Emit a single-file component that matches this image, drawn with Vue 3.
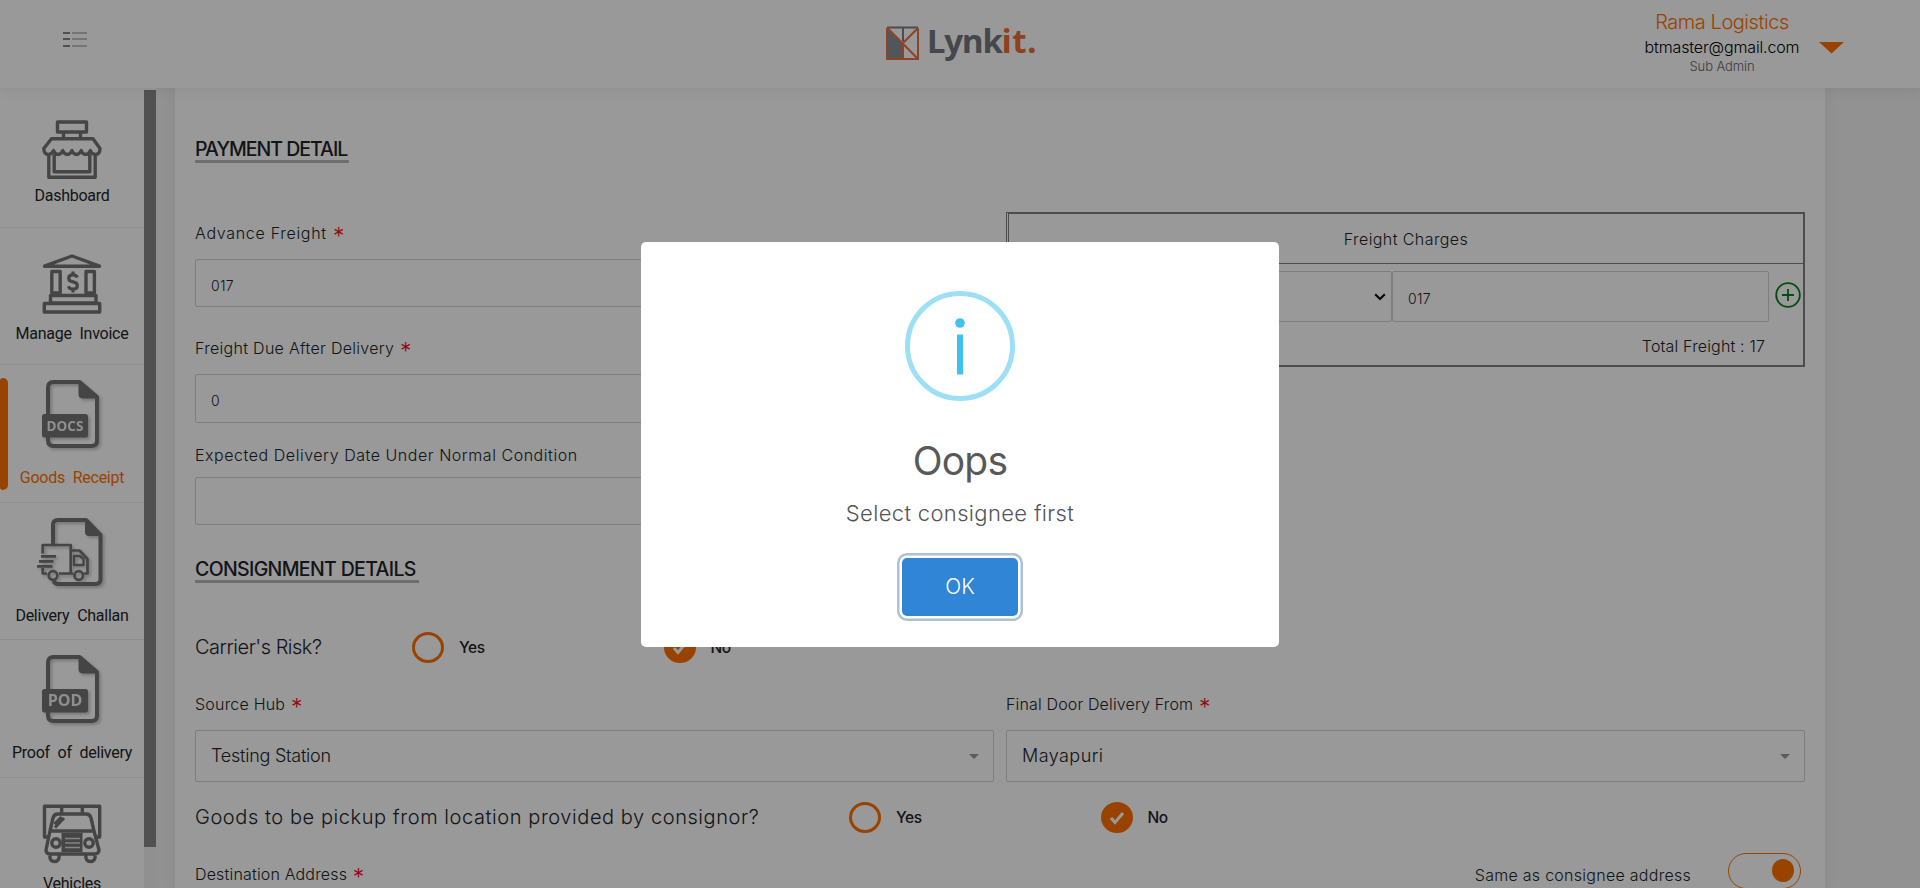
<script setup>
const nav = [
  { id: 'dashboard', label: 'Dashboard' },
  { id: 'invoice', label: 'Manage Invoice' },
  { id: 'receipt', label: 'Goods Receipt', tall: true, active: true, tag: 'DOCS' },
  { id: 'challan', label: 'Delivery Challan', tall: true },
  { id: 'pod', label: 'Proof of delivery', tall: true, tag: 'POD' },
  { id: 'vehicles', label: 'Vehicles' },
]
</script>

<template>
  <div class="page">
    <header class="topbar">
      <svg class="menu" width="24" height="16" viewBox="0 0 24 16">
        <path d="M0 1h7M0 7h7M0 14h7" stroke="#858585" stroke-width="2" />
        <path d="M9 1h15M9 7h15M9 14h15" stroke="#c4c4c4" stroke-width="2" />
      </svg>
      <div class="logo">
        <svg width="33" height="35" viewBox="0 0 33 35" fill="none">
          <path d="M2 4V32H17V17z" fill="#8b8f94" />
          <path d="M1 1.5H32M17 2V15" stroke="#7c8085" stroke-width="2" />
          <path d="M1 2V33H32V2M1.500 2L31 32M31 3L17 17V32" stroke="#ee7040" stroke-width="2" />
        </svg>
        <span class="lynk">Lynk</span><span class="it">it.</span>
      </div>
      <div class="user">
        <div class="company">Rama Logistics</div>
        <div class="email">btmaster@gmail.com</div>
        <div class="role">Sub Admin</div>
      </div>
      <svg class="caret" width="25" height="12" viewBox="0 0 25 12"><path d="M0 0H25L12.500 11.500z" fill="#ff7000" /></svg>
    </header>

    <div class="body">
      <aside class="sidebar">
        <nav class="nav">
          <a v-for="n in nav" :key="n.id" class="item" :class="{ tall: n.tall, active: n.active }">
            <svg v-if="n.id === 'dashboard'" class="ic" width="60" height="60" viewBox="0 0 60 60">
              <path d="M15.500 6H44.500V16H15.500zM21.500 16v6M38.500 16v6M9.500 22.800H51L58 32.500q0 6-4.700 6q-3.500 0-5-4q-1.500 4-4.600 4t-4.600-4q-1.500 4-4.600 4t-4.600-4q-1.500 4-4.600 4t-4.600-4q-1.500 4-4.600 4t-4.600-4q-1.500 4-5 4q-4.500 0-4.700-6zM6.800 38.500V61.300H53.200V38.500M12.200 38.500V55.700H47.800V38.500" />
            </svg>
            <svg v-else-if="n.id === 'invoice'" class="ic" width="60" height="60" viewBox="0 0 60 60">
              <path d="M2.500 12.200L30 2L57.500 12.200zM9.800 17.500H18.200V39H9.800zM44 17.500H52.400V39H44zM8.500 41.500H54V49H8.500zM2.300 49.500H57.700V58H2.300z" />
              <path d="M35.300 23.500q-1-2.700-4.300-2.700q-4.300 0-4.300 3.400q0 3 4.300 3.700t4.300 3.800q0 3.500-4.300 3.500q-3.600 0-4.600-3M31 17.500v3.500M31 35v3.500" stroke-width="3.200" />
            </svg>
            <svg v-else-if="n.id === 'vehicles'" class="ic" width="60" height="60" viewBox="0 0 60 60">
              <path d="M8 33H2.500V2.300H57.700V33H52M19.700 2v8M40.300 2v8M8 27L11 14q1-4 5-4H44q4 0 5 4L52 27zM8 27L4 46q0 4 4 4H52q5 0 5-4L52 27M8 50q-1 7.500 4.500 7.500T17 50M44 50q-1 7.500 4.500 7.500T53 50" />
              <path d="M12.500 20l7-7M13 23.500L22 14" stroke-width="3" />
              <rect x="19.500" y="29" width="21" height="19" fill="#737373" stroke="none" />
              <path d="M23 34.500H38M23 39H38M23 43.500H38" stroke="#ddd" stroke-width="1.600" />
              <circle cx="14" cy="39" r="4.200" /><circle cx="47" cy="39" r="4.200" />
            </svg>
            <svg v-else-if="n.id === 'challan'" class="ic shade" width="72" height="70" viewBox="0 0 72 70">
              <path d="M17 27V7q0-5 5-5H50L64.500 17V61q0 5-5 5H22q-3 0-4.500-3" stroke-width="4" />
              <path d="M49 1V14q0 4 4 4H66z" fill="#737373" stroke="none" />
              <path d="M6.700 35.500V27H34.700V55.500M35 32.500H43.500L51.500 41V55.500H48M6.700 50V55.500H11M23 55.500H37M5 38.300H20M3 43.300H17.500M1 48.300H16.500" stroke-width="2.700" />
              <path d="M38 38H44L47.500 41V47H38z" stroke-width="2.400" />
              <circle cx="17" cy="57.500" r="4.300" stroke-width="2.700" /><circle cx="42.700" cy="57.500" r="4.300" stroke-width="2.700" />
            </svg>
            <svg v-else class="ic shade" width="72" height="70" viewBox="0 0 72 70">
              <path d="M12 36V7.500q0-5.500 5.500-5.500H43.500L61 17V60.500q0 5.500-5.500 5.500H17.500q-5.500 0-5.500-5.500V56" stroke-width="4" />
              <path d="M42.500 1V14q0 4.500 4.500 4.500H62z" fill="#737373" stroke="none" />
              <rect x="6" y="34" width="46" height="23.500" rx="2.500" fill="#737373" stroke="none" />
              <text x="29" y="51" text-anchor="middle" class="tag" :class="{ big: n.tag === 'POD' }">{{ n.tag }}</text>
            </svg>
            <span class="label">{{ n.label }}</span>
          </a>
        </nav>
        <div class="track"><div class="thumb"></div></div>
      </aside>

      <main class="card">
        <h2 class="pay">PAYMENT DETAIL</h2>
        <section class="cols payment">
          <div class="col">
            <label class="lbl l-adv">Advance Freight <b class="req">*</b></label>
            <div class="box b1">017</div>
            <label class="lbl l-due">Freight Due After Delivery <b class="req">*</b></label>
            <div class="box b2">0</div>
            <label class="lbl l-exp">Expected Delivery Date Under Normal Condition</label>
            <div class="box b3"></div>
          </div>
          <div class="freight">
            <div class="fhead">Freight Charges</div>
            <div class="frow">
              <div class="fsel">
                <svg width="12" height="8" viewBox="0 0 12 8"><path d="M1.200 1.200L6 6L10.800 1.200" fill="none" stroke="#111" stroke-width="2.200" /></svg>
              </div>
              <div class="fin">017</div>
              <svg class="plus" width="26" height="26" viewBox="0 0 26 26"><circle cx="13" cy="13" r="11.800" /><path d="M13 7V19M7 13H19" /></svg>
            </div>
            <div class="total">Total Freight : 17</div>
          </div>
        </section>

        <h2 class="con">CONSIGNMENT DETAILS</h2>
        <div class="ask risk">
          <span class="q q1">Carrier's Risk?</span>
          <i class="radio"></i><span class="opt">Yes</span>
          <i class="radio on"><svg width="16" height="14" viewBox="0 0 16 14"><path d="M2 7L6 11.500L14 2" /></svg></i><span class="opt">No</span>
        </div>

        <section class="cols hubs">
          <div class="col">
            <label class="lbl l-src">Source Hub <b class="req">*</b></label>
            <div class="pick p1">Testing Station<i></i></div>
          </div>
          <div class="col">
            <label class="lbl l-door">Final Door Delivery From <b class="req">*</b></label>
            <div class="pick p2">Mayapuri<i></i></div>
          </div>
        </section>

        <div class="ask pickup">
          <span class="q q2">Goods to be pickup from location provided by consignor?</span>
          <i class="radio"></i><span class="opt">Yes</span>
          <i class="radio on"><svg width="16" height="14" viewBox="0 0 16 14"><path d="M2 7L6 11.500L14 2" /></svg></i><span class="opt">No</span>
        </div>

        <div class="dest">
          <label class="lbl l-dest">Destination Address <b class="req">*</b></label>
          <span class="lbl same">Same as consignee address</span>
          <div class="toggle"><i></i></div>
        </div>
      </main>
    </div>

    <div class="overlay">
      <div class="modal">
        <svg class="info" width="110" height="110" viewBox="0 0 110 110">
          <circle cx="55" cy="55" r="52.500" fill="none" stroke="#9de0f6" stroke-width="5" />
          <circle cx="55" cy="32" r="4.800" fill="#3fc3ee" />
          <rect x="52" y="43.500" width="6" height="40" fill="#3fc3ee" />
        </svg>
        <div class="title">Oops</div>
        <div class="msg">Select consignee first</div>
        <button class="ok">OK</button>
      </div>
    </div>
  </div>
</template>

<style>
html, body { margin: 0; overflow: hidden; }
</style>

<style scoped>
* { box-sizing: border-box; }
.page { width: 1920px; height: 888px; overflow: hidden; background: #f3f3f3; font-family: Inter, "Liberation Sans", sans-serif; font-weight: 300; color: #212529; display: flex; flex-direction: column; }

.topbar { position: relative; z-index: 2; flex: none; height: 88px; background: #fff; box-shadow: 0 2px 12px rgba(0,0,0,.08); display: flex; align-items: flex-start; }
.menu { margin: 32px 0 0 63px; }
.logo { display: flex; align-items: flex-start; margin: 26px 0 0 799px; width: 160px; font-family: "Noto Sans", sans-serif; font-weight: 700; font-size: 33px; line-height: 29px; color: #73777c; }
.logo svg { margin-right: 8px; flex: none; }
.lynk { letter-spacing: -1.100px; }
.it { letter-spacing: .6px; color: #ef6c36; }
.user { margin: 10px 0 0 590px; width: 172px; display: flex; flex-direction: column; align-items: center; }
.company { color: #ff7000; font-size: 20px; line-height: 24px; letter-spacing: -.46px; }
.email { color: #000; font-size: 16px; line-height: 20px; letter-spacing: -.14px; margin-top: 3px; }
.role { color: #666; font-size: 13px; line-height: 16px; letter-spacing: -.1px; margin-top: 1px; }
.caret { margin: 42px 0 0 11px; }

.body { flex: 1; min-height: 0; display: flex; }
.sidebar { flex: none; width: 156px; display: flex; padding-top: 2px; background: #fff; }
.nav { width: 144px; height: 798px; overflow: hidden; }
.item { display: flex; flex-direction: column; align-items: center; position: relative; height: 137.500px; padding-top: 26px; border-bottom: 1px solid #ebebeb; }
.item.tall { padding-top: 15px; }
.ic { flex: none; overflow: visible; fill: none; stroke: #737373; stroke-width: 3.400; stroke-linejoin: round; }
.shade { filter: drop-shadow(2px 2px 1.500px rgba(0,0,0,.22)); }
.tag { font: 700 13.500px "Open Sans", sans-serif; fill: #eee; stroke: none; }
.tag.big { font-size: 16px; }
.label { font-family: Roboto, sans-serif; font-weight: 400; font-size: 16px; line-height: 20px; letter-spacing: -.25px; word-spacing: 4px; white-space: nowrap; margin-top: 10px; }
.tall .label { margin-top: 18px; }
.active .label { color: #ff7000; }
.active::before { content: ""; position: absolute; left: 0; top: 13px; width: 8px; height: 112px; background: #ff7000; border-radius: 3px 5px 5px 3px; }
.track { width: 12px; background: #f1f1f1; }
.thumb { height: 757px; background: #888; }

.card { flex: none; margin-left: 19px; width: 1650px; height: 800px; padding: 0 20px; background: #fff; box-shadow: 0 0 14px rgba(0,0,0,.07); display: flex; flex-direction: column; align-items: flex-start; overflow: hidden; }
h2 { margin: 50px 0 0; font-size: 19.500px; font-weight: 500; line-height: 22px; height: 25px; border-bottom: 3px solid #bababa; white-space: nowrap; flex: none; }
.pay { letter-spacing: -1px; width: 154px; }
.con { letter-spacing: -.65px; width: 224px; margin-top: 33px; }
.cols { display: grid; grid-template-columns: 799px 799px; gap: 12px; flex: none; }
.col { display: flex; flex-direction: column; }
.payment { margin-top: 49px; height: 313px; align-items: start; }
.payment .col { padding-top: 11px; }
.lbl { font-size: 16px; line-height: 20px; height: 20px; white-space: nowrap; }
.req { color: #f01010; font: 300 23px/10px Inter, sans-serif; letter-spacing: 0; vertical-align: -5px; margin-left: 1px; }
.l-adv { letter-spacing: .7px; }
.l-due { letter-spacing: .3px; margin-top: 31px; }
.l-exp { letter-spacing: .54px; margin-top: 22px; }
.box { border: 1px solid #d3d3d3; border-radius: 2px; padding-left: 15px; font-size: 14px; letter-spacing: .3px; height: 48px; line-height: 51px; margin-top: 16px; }
.b2 { height: 49px; line-height: 52px; margin-top: 16px; }
.b3 { margin-top: 12px; }

.freight { height: 155px; border: 2px solid #808080; border-left: 3px double #808080; font-size: 16px; }
.fhead { height: 50px; line-height: 50px; text-align: center; border-bottom: 1px solid #808080; letter-spacing: .41px; }
.frow { display: flex; padding-top: 7px; }
.fsel { width: 383px; height: 51px; border: 1px solid #d3d3d3; border-radius: 2px; display: flex; justify-content: flex-end; padding: 21px 5px 0 0; }
.fin { width: 377px; height: 51px; border: 1px solid #d3d3d3; border-radius: 2px; padding-left: 15px; font-size: 14px; letter-spacing: .3px; line-height: 54px; }
.plus { margin: 11px 0 0 6px; fill: none; stroke: #088018; stroke-width: 1.800; }
.total { text-align: right; padding-right: 38px; margin-top: 14px; line-height: 20px; letter-spacing: .16px; }

.ask { display: flex; align-items: center; height: 31px; flex: none; }
.risk { margin-top: 49px; }
.q { font-size: 20px; white-space: nowrap; line-height: 24px; margin-top: -1px; }
.q1 { width: 217px; letter-spacing: -.49px; }
.q2 { width: 654px; letter-spacing: .57px; }
.radio { width: 32px; height: 31px; border: 3px solid #ff7000; border-radius: 50%; flex: none; display: flex; align-items: center; justify-content: center; }
.radio.on { background: #ff7000; }
.radio svg { fill: none; stroke: #fff; stroke-width: 3; }
.opt { font-size: 15.500px; font-weight: 500; letter-spacing: -.4px; padding-left: 15px; width: 219.500px; }

.hubs { margin-top: 31px; }
.l-src { letter-spacing: .21px; }
.l-door { letter-spacing: .15px; }
.pick { margin-top: 16px; height: 52px; border: 1px solid #d3d3d3; border-radius: 2px; padding: 0 14px 0 15px; line-height: 50px; font-size: 18px; display: flex; justify-content: space-between; align-items: center; }
.pick i { border: 5px solid transparent; border-top-color: #999; border-bottom: 0; }
.p1 { letter-spacing: -.24px; }
.p2 { letter-spacing: .45px; }
.pickup { margin-top: 20px; }
.dest { margin-top: 20px; width: 1610px; display: flex; align-items: flex-start; flex: none; }
.l-dest { letter-spacing: .17px; margin-top: 11px; }
.same { margin: 12px 37px 0 auto; letter-spacing: .27px; }
.toggle { width: 73px; height: 36px; border: 1px solid #ff7000; border-radius: 18px; margin-right: 4px; display: flex; justify-content: flex-end; padding: 5px 6px 0 0; }
.toggle i { width: 22px; height: 23px; border-radius: 50%; background: #ff7000; }

.overlay { position: fixed; inset: 0; z-index: 5; background: rgba(0,0,0,.4); display: flex; align-items: center; justify-content: center; }
.modal { width: 638px; height: 405px; background: #fff; border-radius: 5px; display: flex; flex-direction: column; align-items: center; }
.info { margin-top: 49px; flex: none; }
.title { margin-top: 37px; font-size: 39px; font-weight: 400; line-height: 46px; color: #595959; letter-spacing: -.8px; }
.msg { margin-top: 15px; font-size: 22px; line-height: 28px; color: #545454; letter-spacing: .34px; }
.ok { margin: 31px 0 0; padding: 0; width: 116px; height: 58px; border: 0; border-radius: 5px; background: #3085d6; color: #fff; font: 300 21px/56px Inter, sans-serif; box-shadow: 0 0 0 2.500px #fff, 0 0 0 5px #adc1d5; }
</style>
